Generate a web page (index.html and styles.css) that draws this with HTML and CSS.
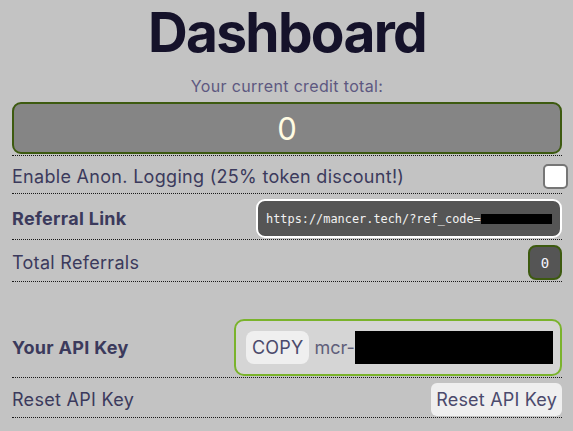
FILE: index.html
```html
<!DOCTYPE html>
<html lang="en">
<head>
<meta charset="utf-8">
<title>Dashboard</title>
<link rel="stylesheet" href="styles.css">
</head>
<body>
<main class="page">
  <h1 class="title">Dashboard</h1>
  <p class="subtitle">Your current credit total:</p>
  <div class="row row-credit">
    <div class="credit">0</div>
  </div>
  <div class="row row-check">
    <span class="label">Enable Anon. Logging (25% token discount!)</span>
    <span class="checkbox" role="checkbox" aria-checked="false"></span>
  </div>
  <div class="row">
    <span class="label bold">Referral Link</span>
    <div class="ref-box"><span class="ref-text">https://mancer.tech/?ref_code=</span><span class="ref-redact"></span></div>
  </div>
  <div class="row">
    <span class="label">Total Referrals</span>
    <span class="badge">0</span>
  </div>
  <div class="row row-api">
    <span class="label bold">Your API Key</span>
    <div class="key-box">
      <button class="btn">COPY</button>
      <span class="key-prefix">mcr-</span>
      <span class="key-redact"></span>
    </div>
  </div>
  <div class="row">
    <span class="label">Reset API Key</span>
    <button class="btn btn-reset">Reset API Key</button>
  </div>
</main>
</body>
</html>
```

FILE: styles.css
```css
html, body {
  margin: 0;
  padding: 0;
  background: #c3c3c3;
}

body {
  font-family: Inter, "Noto Sans", "DejaVu Sans", sans-serif;
  color: #3b3a5c;
}

.page {
  padding: 0 11px 0 12px;
}

.title {
  margin: 0;
  font-size: 55px;
  line-height: 64px;
  font-weight: 700;
  text-align: center;
  color: #15122a;
  letter-spacing: -1.7px;
}

.subtitle {
  margin: 12px 0 0;
  font-size: 16px;
  line-height: 20px;
  text-align: center;
  color: #5d5880;
  letter-spacing: 0.35px;
}

.row {
  display: flex;
  align-items: center;
  justify-content: space-between;
  padding: 5px 0 1px;
  border-bottom: 1px dotted #1a1a1a;
}

.row-credit {
  margin-top: 6px;
  padding: 0 0 1px;
}

.credit {
  flex: 1;
  height: 52px;
  box-sizing: border-box;
  border: 2px solid #3d5a10;
  border-radius: 9px;
  background: #858585;
  color: #fffbe2;
  font-size: 31px;
  display: flex;
  align-items: center;
  justify-content: center;
}

.row-check {
  min-height: 31px;
}

.label {
  font-size: 18px;
  line-height: 22px;
  color: #3b3a5c;
  letter-spacing: 0.3px;
}

.bold {
  font-weight: 700;
  letter-spacing: 0.3px;
}

.checkbox {
  width: 25px;
  height: 25px;
  box-sizing: border-box;
  border: 2px solid #767676;
  border-radius: 5px;
  background: #ffffff;
  margin-right: -6px;
}

.ref-box {
  width: 306px;
  height: 39px;
  box-sizing: border-box;
  border: 2px solid #ffffff;
  border-radius: 9px;
  background: #555555;
  display: flex;
  align-items: center;
  padding: 0 8px;
}

.ref-text {
  font-family: "DejaVu Sans Mono", "Liberation Mono", monospace;
  font-size: 11.9px;
  color: #f2f2f2;
  white-space: nowrap;
}

.ref-redact {
  flex: 1;
  height: 10px;
  background: #000000;
}

.badge {
  width: 34px;
  height: 35px;
  box-sizing: border-box;
  border: 2px solid #3d5a10;
  border-radius: 8px;
  background: #555555;
  color: #f4f4ff;
  font-family: "DejaVu Sans Mono", "Liberation Mono", monospace;
  font-size: 14px;
  display: flex;
  align-items: center;
  justify-content: center;
}

.row-api {
  margin-top: 32px;
}

.key-box {
  width: 328px;
  height: 57px;
  box-sizing: border-box;
  border: 2px solid #7ab32c;
  border-radius: 10px;
  background: #d5d5d5;
  display: flex;
  align-items: center;
  padding: 0 7px 0 10px;
}

.btn {
  font-family: Inter, "Noto Sans", sans-serif;
  font-size: 18px;
  color: #4b4a6c;
  background: #efefef;
  border: none;
  border-radius: 8px;
  height: 33px;
  padding: 0 6px;
  margin: 0;
  line-height: 33px;
  letter-spacing: 0.2px;
}

.key-prefix {
  margin-left: 5px;
  font-size: 18px;
  color: #5f5e7a;
}

.key-redact {
  flex: 1;
  height: 33px;
  background: #000000;
}

.btn-reset {
  border-radius: 6px;
  padding: 0 5px;
}
```
